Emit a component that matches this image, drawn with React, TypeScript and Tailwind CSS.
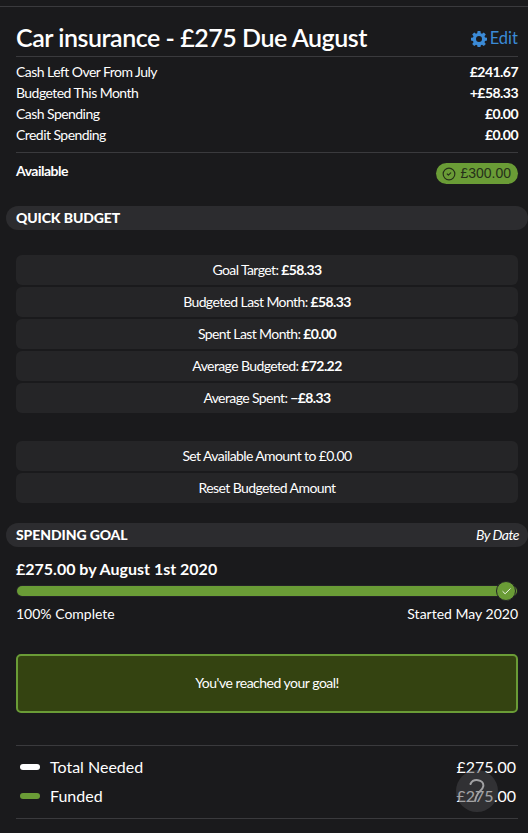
import { Check, CircleCheck } from "lucide-react";

function Row({ label, value }: { label: string; value: string }) {
  return (
    <div className="flex h-[21px] items-center justify-between text-[14px] tracking-[-0.55px] text-white">
      <span>{label}</span>
      <span className="font-bold">{value}</span>
    </div>
  );
}

function QuickButton({ children }: { children: React.ReactNode }) {
  return (
    <div className="flex h-[30px] items-center justify-center rounded-[6px] bg-[#252527] pb-[2px] text-[14px] tracking-[-0.6px] text-white">
      {children}
    </div>
  );
}

function SectionBar({ title, right }: { title: string; right?: string }) {
  return (
    <div className="ml-[6px] flex h-[24px] items-center justify-between rounded-l-[12px] rounded-r-[12px] bg-[#2c2c2f] pb-[2px] pl-[10px] pr-[9px]">
      <span className="text-[14px] font-black tracking-[-0.1px] text-white">{title}</span>
      {right && <span className="text-[14px] italic tracking-[-0.5px] text-white">{right}</span>}
    </div>
  );
}

function GearIcon() {
  return (
    <svg viewBox="0 0 16 16" className="h-[16px] w-[16px] fill-[#3b8ad6]">
      <path
        fillRule="evenodd"
        d="M6.6 0h2.8l.4 2.2 1.2.5L12.8 1.4l2 2-1.3 1.8.5 1.2 2 .4v2.8l-2 .4-.5 1.2 1.3 1.8-2 2-1.8-1.3-1.2.5-.4 2H6.6l-.4-2-1.2-.5-1.8 1.3-2-2 1.3-1.8-.5-1.2-2-.4V6.8l2-.4.5-1.2L1.2 3.4l2-2L5 2.7l1.2-.5zM8 5a3 3 0 1 0 0 6 3 3 0 0 0 0-6z"
      />
    </svg>
  );
}

export default function App() {
  return (
    <div className="relative h-[833px] w-[528px] overflow-hidden bg-[#1a1a1c] pt-[6px] font-['Lato','Noto_Sans',sans-serif]">
      <div className="h-px bg-[#3a3a3d]" />

      {/* header */}
      <div className="px-[10px] pl-[16px]">
        <div className="flex h-[50px] items-end justify-between border-b border-[#3a3a3d] pb-[3px]">
          <h1 className="text-[25px] font-semibold leading-[32px] tracking-[-0.47px] text-white">Car insurance - £275 Due August</h1>
          <div className="mb-[2px] flex items-center gap-[3px] text-[16.5px] text-[#3b8ad6]">
            <GearIcon />
            <span>Edit</span>
          </div>
        </div>

        <div className="mt-[4px] border-b border-[#3a3a3d] pb-[7px]">
          <Row label="Cash Left Over From July" value="£241.67" />
          <Row label="Budgeted This Month" value="+£58.33" />
          <Row label="Cash Spending" value="£0.00" />
          <Row label="Credit Spending" value="£0.00" />
        </div>

        <div className="mt-[9px] flex items-start justify-between">
          <span className="text-[14px] font-bold leading-[18px] tracking-[-0.5px] text-white">Available</span>
          <div className="mt-[1px] flex h-[21px] items-center gap-[4px] rounded-full bg-[#6a9c36] pl-[6px] pr-[7px] font-['Liberation_Sans',sans-serif] text-[14px] text-[#26301a]">
            <CircleCheck className="h-[14px] w-[14px]" strokeWidth={2} />
            <span>£300.00</span>
          </div>
        </div>
      </div>

      {/* quick budget */}
      <div className="mt-[22px]">
        <SectionBar title="QUICK BUDGET" />
      </div>

      <div className="mt-[25px] flex flex-col gap-[2px] px-[10px] pl-[16px]">
        <QuickButton>Goal Target:&nbsp;<b>£58.33</b></QuickButton>
        <QuickButton>Budgeted Last Month:&nbsp;<b>£58.33</b></QuickButton>
        <QuickButton>Spent Last Month:&nbsp;<b>£0.00</b></QuickButton>
        <QuickButton>Average Budgeted:&nbsp;<b>£72.22</b></QuickButton>
        <QuickButton>Average Spent:&nbsp;<b>−£8.33</b></QuickButton>
      </div>

      <div className="mt-[28px] flex flex-col gap-[2px] px-[10px] pl-[16px]">
        <QuickButton>Set Available Amount to £0.00</QuickButton>
        <QuickButton>Reset Budgeted Amount</QuickButton>
      </div>

      {/* spending goal */}
      <div className="mt-[20px]">
        <SectionBar title="SPENDING GOAL" right="By Date" />
      </div>

      <div className="px-[10px] pl-[16px]">
        <div className="mt-[12px] text-[16px] font-bold leading-[20px] text-white">£275.00 by August 1st 2020</div>

        <div className="relative mt-[6px] h-[12px] rounded-full bg-[#232326] p-px">
          <div className="h-[10px] rounded-full bg-[#6a9c36]" />
          <div className="absolute right-[2px] top-[-4px] flex h-[20px] w-[20px] items-center justify-center rounded-full border border-[#232326] bg-[#6a9c36]">
            <Check className="h-[11px] w-[11px] text-white" strokeWidth={2} />
          </div>
        </div>

        <div className="mt-[7px] flex justify-between text-[14px] leading-[20px] text-white">
          <span>100% Complete</span>
          <span>Started May 2020</span>
        </div>

        <div className="mt-[30px] flex h-[59px] items-center justify-center rounded-[5px] border-2 border-[#6a9c36] bg-[#344311] pb-[3px] text-[14px] tracking-[-0.5px] text-white">
          You've reached your goal!
        </div>

        <div className="mt-[32px] border-y border-[#3a3a3d] pb-[8px] pt-[6px] text-[16px] text-white">
          <div className="flex h-[29px] items-center justify-between pr-[2px]">
            <div className="flex items-center gap-[10px] pl-[4px]">
              <span className="h-[6px] w-[20px] rounded-full bg-white" />
              <span>Total Needed</span>
            </div>
            <span>£275.00</span>
          </div>
          <div className="flex h-[29px] items-center justify-between pr-[2px]">
            <div className="flex items-center gap-[10px] pl-[4px]">
              <span className="h-[6px] w-[20px] rounded-full bg-[#6a9c36]" />
              <span>Funded</span>
            </div>
            <span>£275.00</span>
          </div>
        </div>
      </div>

      {/* floating help button */}
      <div className="absolute left-[456px] top-[770px] flex h-[42px] w-[42px] items-center justify-center rounded-full bg-[#48484b]/50 text-[#a2a2a4]">
        <svg viewBox="0 0 16 24" className="h-[24px] w-[16px] fill-none stroke-current" strokeWidth={2} strokeLinecap="round">
          <path d="M1.500 5C3 1.800 6 .8 9 1.200c3.500.5 5.700 3 5.300 6-.4 3-3 4.300-5 6.800-1.200 1.500-2.300 4-3.300 8" />
        </svg>
      </div>
    </div>
  );
}
